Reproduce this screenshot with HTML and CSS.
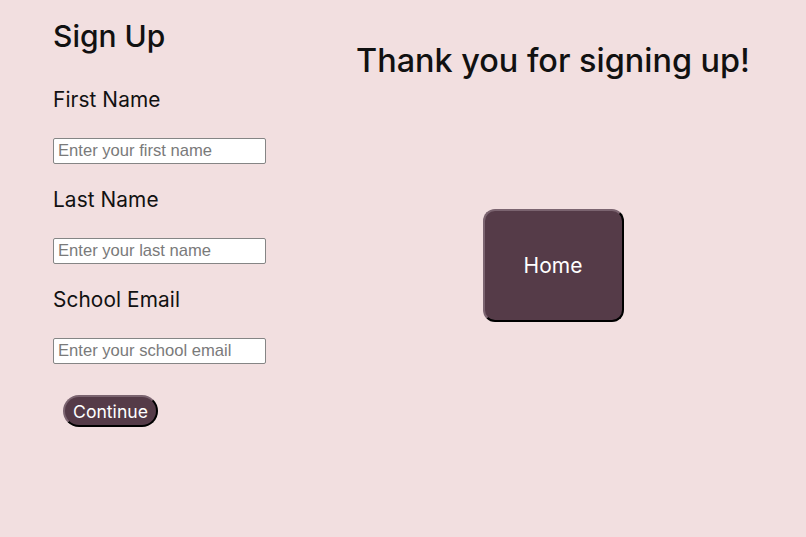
FILE: index.html
```html
<!DOCTYPE html>
<html>
<head>
<meta charset="utf-8">
<link rel="stylesheet" href="styles.css">
</head>
<body>
<div class="page">
  <form class="form">
    <h2 class="title">Sign Up</h2>
    <label class="label first">First Name</label>
    <input class="field" type="text" placeholder="Enter your first name">
    <label class="label">Last Name</label>
    <input class="field" type="text" placeholder="Enter your last name">
    <label class="label">School Email</label>
    <input class="field" type="text" placeholder="Enter your school email">
    <div class="actions"><button type="button" class="btn continue">Continue</button></div>
  </form>
  <section class="thanks">
    <h1 class="thanks-title">Thank you for signing up!</h1>
    <button type="button" class="btn home">Home</button>
  </section>
</div>
</body>
</html>
```
FILE: styles.css
```css
html, body {
  margin: 0;
  padding: 0;
  background: #f2dfe0;
  height: 100%;
}
body {
  font-family: Inter, "Noto Sans", sans-serif;
  color: #111;
}
.page {
  display: flex;
  min-height: 537px;
}
.form {
  width: 300px;
  box-sizing: border-box;
  padding-left: 53px;
  display: flex;
  flex-direction: column;
  align-items: flex-start;
}
.title {
  margin: 16px 0 0;
  font-size: 30px;
  line-height: 40px;
  font-weight: 500;
}
.label {
  display: block;
  margin-top: 21px;
  font-size: 20.8px;
  line-height: 30px;
  font-weight: 400;
  letter-spacing: 0.1px;
}
.label.first {
  margin-top: 29px;
}
.field {
  margin-top: 23px;
  box-sizing: border-box;
  width: 213px;
  height: 26px;
  padding: 0 4px;
  border: 1px solid #858585;
  border-radius: 2px;
  background: #fff;
  font-family: "Liberation Sans", Arial, sans-serif;
  font-size: 16.6px;
  color: #333;
}
.field::placeholder {
  color: #7a7a7a;
}
.actions {
  margin-top: 31px;
  margin-left: 10px;
}
.btn {
  box-sizing: border-box;
  background: #553b48;
  color: #fff;
  font-family: Inter, "Noto Sans", sans-serif;
  border-style: solid;
  border-width: 2px;
  border-color: #7b6470 #000 #000 #7b6470;
  cursor: pointer;
}
.continue {
  width: 95px;
  height: 32px;
  border-radius: 16px;
  font-size: 17.6px;
  padding: 0;
}
.thanks {
  flex: 1;
  display: flex;
  flex-direction: column;
  align-items: center;
}
.thanks-title {
  margin: 39px 0 0;
  font-size: 32.4px;
  line-height: 44px;
  font-weight: 500;
}
.home {
  margin-top: 126px;
  width: 141px;
  height: 113px;
  border-radius: 12px;
  font-size: 21px;
  padding: 0;
}
```
